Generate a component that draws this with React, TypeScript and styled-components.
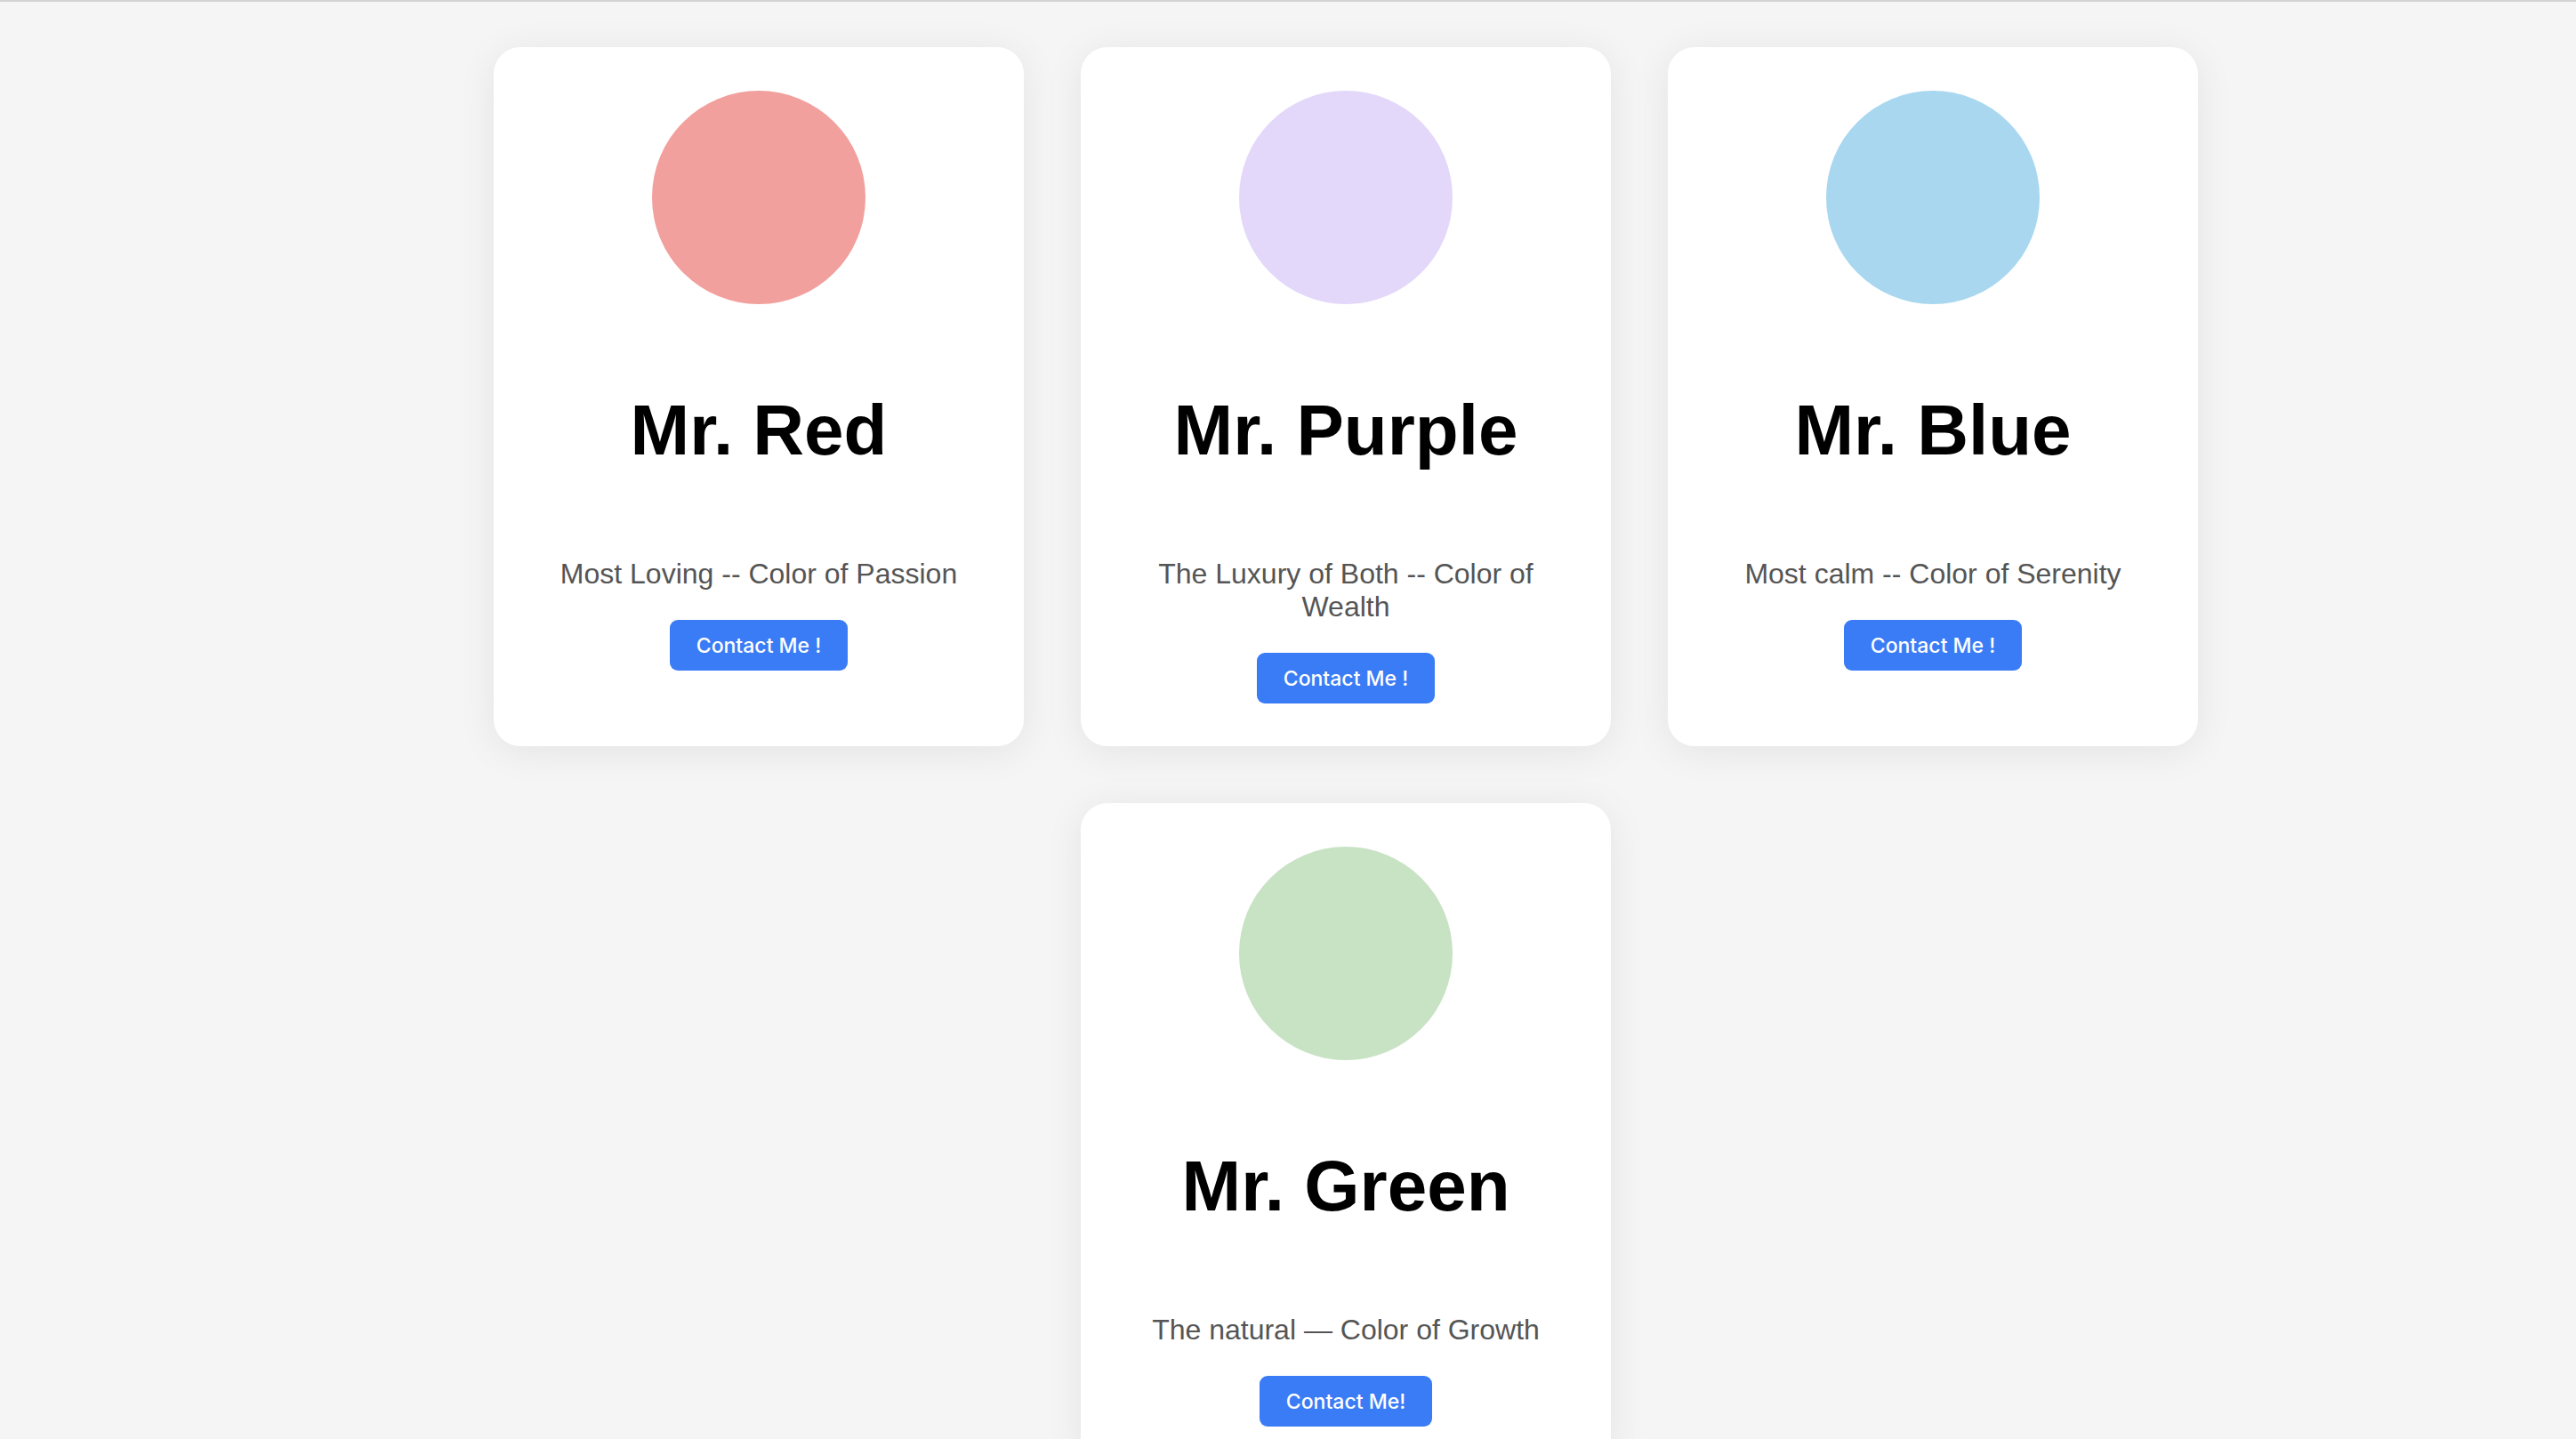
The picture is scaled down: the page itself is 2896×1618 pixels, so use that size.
import React from "react";
import styled, { createGlobalStyle } from "styled-components";

const GlobalStyle = createGlobalStyle`
  html, body {
    margin: 0;
    padding: 0;
    background: #f5f5f5;
  }
  body {
    font-family: "Liberation Sans", Arial, Helvetica, sans-serif;
  }
  * { box-sizing: border-box; }
`;

const Page = styled.main`
  min-height: 100vh;
  background: #f5f5f5;
  border-top: 2px solid #d2d2d2;
  padding: 51px 0 64px 130px;
`;

const CardGrid = styled.div`
  max-width: 2000px;
  margin: 0 auto;
  display: flex;
  flex-wrap: wrap;
  justify-content: center;
  gap: 64px;
`;

const Card = styled.article`
  width: 596px;
  padding: 49px 48px 48px;
  background: #ffffff;
  border-radius: 30px;
  box-shadow: 0 6px 44px rgba(0, 0, 0, 0.075);
  display: flex;
  flex-direction: column;
  align-items: center;
  text-align: center;
`;

const Avatar = styled.div<{ $color: string }>`
  width: 240px;
  height: 240px;
  border-radius: 50%;
  background: ${(p) => p.$color};
  flex-shrink: 0;
`;

const Name = styled.h1`
  margin: 96px 0 0;
  font-family: "Liberation Sans", Arial, Helvetica, sans-serif;
  font-size: 80px;
  line-height: 92px;
  font-weight: 700;
  color: #000000;
`;

const Tagline = styled.p`
  margin: 97px 0 0;
  font-family: "Liberation Sans", Arial, Helvetica, sans-serif;
  font-size: 32px;
  line-height: 37px;
  color: #555555;
`;

const ContactButton = styled.button`
  margin-top: 33px;
  height: 57px;
  padding: 0 30px;
  border: none;
  border-radius: 9px;
  background: #3a7cf5;
  color: #ffffff;
  font-family: Inter, "Noto Sans", sans-serif;
  font-size: 23px;
  font-weight: 500;
  cursor: pointer;
`;

type Person = {
  name: string;
  tagline: string;
  color: string;
  cta: string;
};

const people: Person[] = [
  { name: "Mr. Red", tagline: "Most Loving -- Color of Passion", color: "#f1a09d", cta: "Contact Me !" },
  { name: "Mr. Purple", tagline: "The Luxury of Both -- Color of Wealth", color: "#e3d8fa", cta: "Contact Me !" },
  { name: "Mr. Blue", tagline: "Most calm -- Color of Serenity", color: "#a8d7ef", cta: "Contact Me !" },
  { name: "Mr. Green", tagline: "The natural \u2014 Color of Growth", color: "#c8e2c4", cta: "Contact Me!" },
];

export default function App() {
  return (
    <>
      <GlobalStyle />
      <Page>
        <CardGrid>
          {people.map((p) => (
            <Card key={p.name}>
              <Avatar $color={p.color} />
              <Name>{p.name}</Name>
              <Tagline>{p.tagline}</Tagline>
              <ContactButton>{p.cta}</ContactButton>
            </Card>
          ))}
        </CardGrid>
      </Page>
    </>
  );
}
